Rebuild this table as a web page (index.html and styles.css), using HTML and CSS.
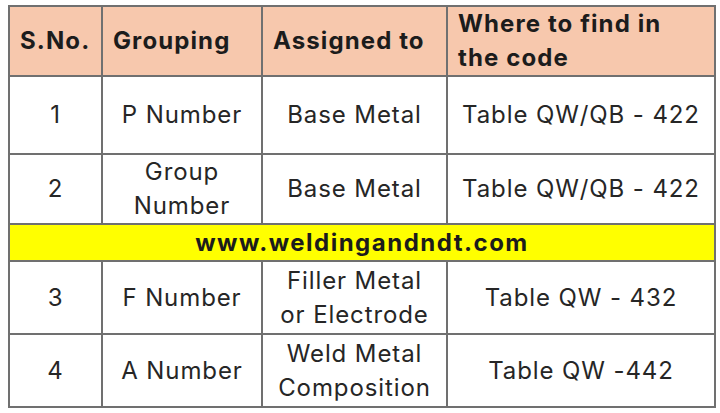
FILE: index.html
```
<!DOCTYPE html>
<html>
<head>
<meta charset="utf-8">
<link rel="stylesheet" href="styles.css">
</head>
<body>
<table class="grid">
  <colgroup>
    <col class="c1"><col class="c2"><col class="c3"><col class="c4">
  </colgroup>
  <tr class="head">
    <th>S.No.</th>
    <th>Grouping</th>
    <th>Assigned to</th>
    <th>Where to find in<br>the code</th>
  </tr>
  <tr class="r1">
    <td>1</td><td>P Number</td><td>Base Metal</td><td>Table QW/QB - 422</td>
  </tr>
  <tr class="r2">
    <td>2</td><td>Group<br>Number</td><td>Base Metal</td><td>Table QW/QB - 422</td>
  </tr>
  <tr class="site">
    <td colspan="4">www.weldingandndt.com</td>
  </tr>
  <tr class="r3">
    <td>3</td><td>F Number</td><td>Filler Metal<br>or Electrode</td><td>Table QW - 432</td>
  </tr>
  <tr class="r4">
    <td>4</td><td>A Number</td><td>Weld Metal<br>Composition</td><td>Table QW -442</td>
  </tr>
</table>
</body>
</html>
```
FILE: styles.css
```
html, body {
  margin: 0;
  background: #ffffff;
}
body {
  padding: 5px 0 0 8px;
  font-family: Inter, "Liberation Sans", sans-serif;
  color: #262626;
}
.grid {
  border-collapse: collapse;
  width: 706px;
  table-layout: fixed;
}
.c1 { width: 93px; }
.c2 { width: 160px; }
.c3 { width: 185px; }
.c4 { width: 268px; }
.grid th, .grid td {
  border: 2px solid #707070;
  font-size: 24px;
  line-height: 34px;
  vertical-align: middle;
  white-space: nowrap;
}
.grid th {
  background: #f7c8ad;
  text-align: left;
  font-weight: 700;
  color: #1c1c1c;
  height: 68px;
  padding: 0 4px 0 10px;
  letter-spacing: 1.1px;
}
.grid td {
  text-align: center;
  padding: 0 2px;
  letter-spacing: 0.9px;
}
.r1 td { height: 76px; }
.r2 td { height: 68px; }
.r3 td, .r4 td { height: 71px; }
.site td {
  background: #ffff00;
  font-weight: 700;
  height: 35px;
  line-height: 30px;
  color: #1c1c1c;
  letter-spacing: 1.5px;
}
```
